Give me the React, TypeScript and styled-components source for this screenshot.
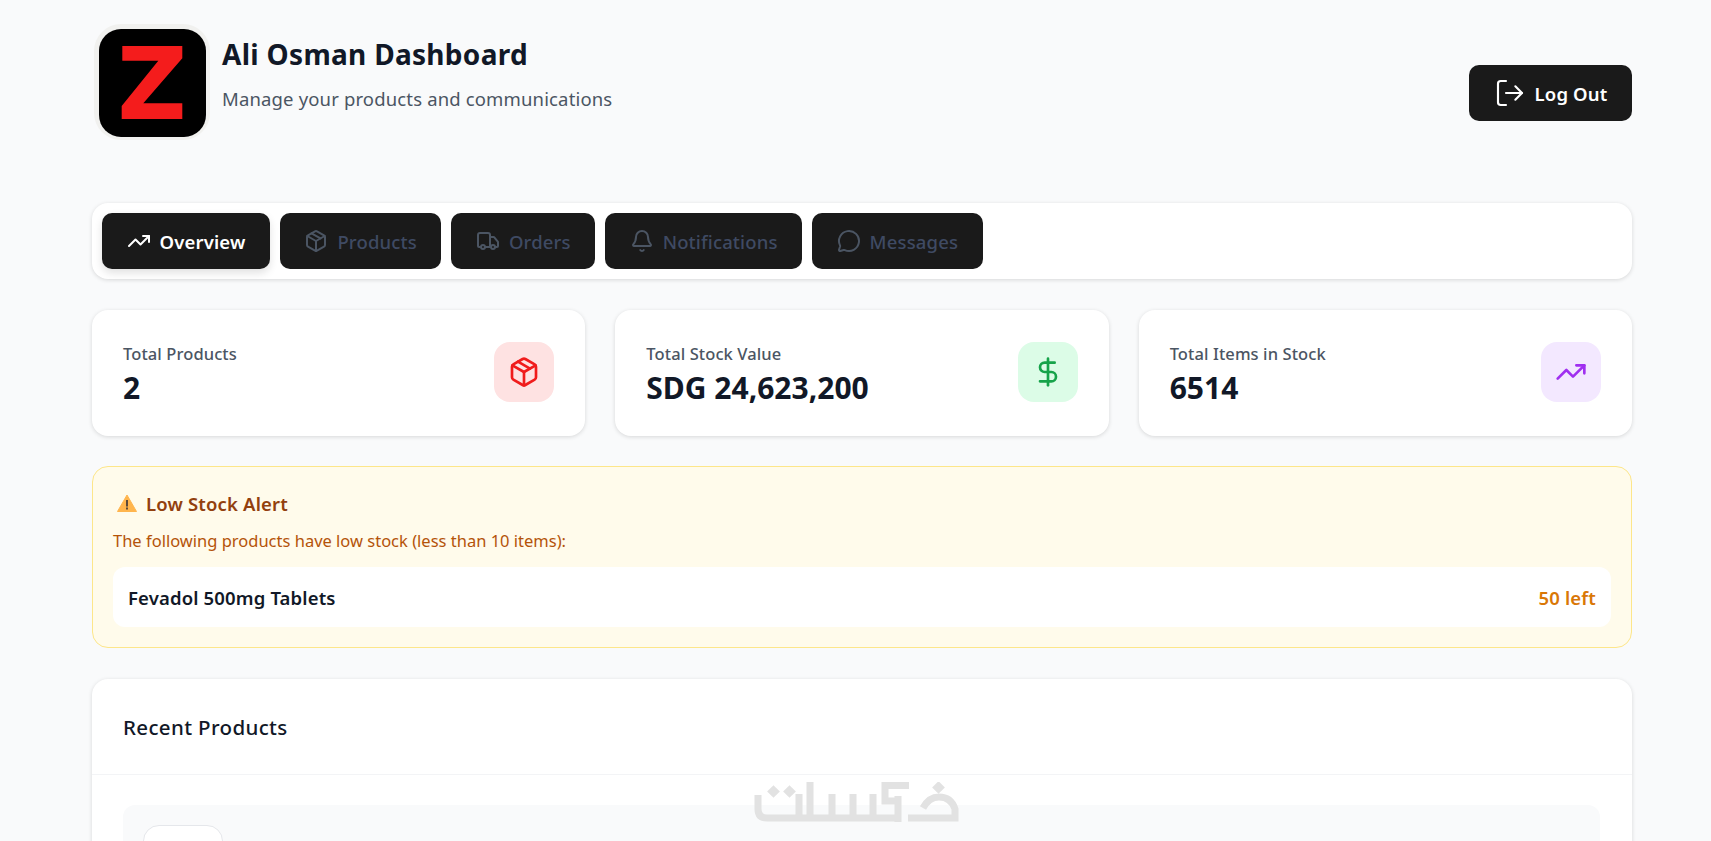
import React from 'react';
import styled, { createGlobalStyle } from 'styled-components';
import { Bell, DollarSign, LogOut, MessageCircle, Package, TrendingUp, Truck } from 'lucide-react';

const GlobalStyle = createGlobalStyle`
  html, body {
    margin: 0;
    height: 100%;
    overflow: hidden;
    background: #f9fafb;
  }
  * {
    box-sizing: border-box;
  }
  body {
    font-family: "Noto Sans", "Open Sans", "Liberation Sans", sans-serif;
    color: #111827;
  }
`;

const Page = styled.div`
  padding: 22px 79px 0 92px;
`;

const Header = styled.header`
  height: 142px;
  margin-bottom: 39px;
  display: flex;
  justify-content: space-between;
  align-items: center;
`;

const Brand = styled.div`
  align-self: flex-start;
  display: flex;
  gap: 10px;
`;

const BrandText = styled.div`
  padding-top: 13px;
`;

const Title = styled.h1`
  margin: 0 0 12px;
  font-size: 28px;
  line-height: 38px;
  font-weight: 700;
  letter-spacing: 0.3px;
`;

const Subtitle = styled.p`
  margin: 0;
  font-size: 18.5px;
  line-height: 28px;
  color: #4b5563;
  letter-spacing: 0.15px;
`;

const LogoutButton = styled.button`
  width: 163px;
  height: 56px;
  border: 0;
  border-radius: 10px;
  background: #1a1a1a;
  color: #fff;
  display: flex;
  align-items: center;
  justify-content: center;
  gap: 9px;
  font: 600 18.5px "Noto Sans", sans-serif;
  letter-spacing: 0.15px;
`;

const TabBar = styled.nav`
  height: 76px;
  margin-bottom: 31px;
  padding: 10px;
  display: flex;
  gap: 10px;
  background: #fff;
  border-radius: 16px;
  box-shadow: 0 1px 4px rgba(0, 0, 0, 0.14);
`;

const Tab = styled.button<{ $active?: boolean }>`
  height: 56px;
  padding: 0 24.5px;
  border: 0;
  border-radius: 10px;
  background: #1a1a1a;
  color: ${p => (p.$active ? '#fff' : '#3f4a63')};
  display: flex;
  align-items: center;
  gap: 9px;
  font: ${p => (p.$active ? 600 : 500)} 18.5px "Noto Sans", sans-serif;
  letter-spacing: 0.15px;
  box-shadow: ${p => (p.$active ? '0 4px 8px rgba(0, 0, 0, 0.12)' : 'none')};

  svg {
    color: ${p => (p.$active ? '#fff' : '#4b5563')};
  }
`;

const StatGrid = styled.section`
  display: grid;
  grid-template-columns: repeat(3, 1fr);
  gap: 30px;
  margin-bottom: 30px;
`;

const StatCard = styled.div`
  height: 126px;
  padding: 32px 31px;
  display: flex;
  justify-content: space-between;
  background: #fff;
  border-radius: 16px;
  box-shadow: 0 1px 4px rgba(0, 0, 0, 0.14);
`;

const StatLabel = styled.div`
  font-size: 16.5px;
  line-height: 24px;
  font-weight: 500;
  color: #4b5563;
  letter-spacing: 0.1px;
`;

const StatValue = styled.div`
  margin-top: 4px;
  font-size: 30px;
  line-height: 36px;
  font-weight: 700;
`;

const StatIcon = styled.div<{ $bg: string; $fg: string }>`
  width: 60px;
  height: 60px;
  border-radius: 16px;
  background: ${p => p.$bg};
  color: ${p => p.$fg};
  display: flex;
  align-items: center;
  justify-content: center;
`;

const Alert = styled.section`
  height: 182px;
  margin-bottom: 31px;
  padding: 20px;
  background: #fffbeb;
  border: 1px solid #fde68a;
  border-radius: 16px;
`;

const AlertTitle = styled.h3`
  margin: 0 0 10px 4px;
  display: flex;
  align-items: center;
  gap: 9px;
  height: 32px;
  font-size: 18.5px;
  font-weight: 600;
  color: #92400e;
  letter-spacing: 0.17px;
`;

const AlertText = styled.p`
  margin: 0 0 14px;
  font-size: 16.5px;
  line-height: 24px;
  color: #b45309;
`;

const AlertRow = styled.div`
  height: 60px;
  padding: 0 15px;
  display: flex;
  justify-content: space-between;
  align-items: center;
  background: #fff;
  border-radius: 12px;
  font-size: 18.5px;
  font-weight: 600;
  letter-spacing: 0.15px;
`;

const LeftCount = styled.span`
  color: #d97706;
`;

const RecentCard = styled.section`
  background: #fff;
  border-radius: 16px;
  box-shadow: 0 1px 4px rgba(0, 0, 0, 0.14);
`;

const RecentHeader = styled.div`
  height: 96px;
  padding: 0 31px;
  display: flex;
  align-items: center;
  border-bottom: 1px solid #f3f4f6;
`;

const RecentTitle = styled.h2`
  margin: 0;
  font-size: 20.5px;
  font-weight: 500;
  letter-spacing: 0.35px;
`;

const RecentBody = styled.div`
  padding: 30px 32px 30px 31px;
`;

const ProductRow = styled.div`
  padding: 20px;
  background: #f9fafb;
  border-radius: 12px;
`;

const ProductThumb = styled.div`
  width: 80px;
  height: 80px;
  background: #fff;
  border: 1px solid #e5e7eb;
  border-radius: 16px;
`;

const Watermark = styled.svg`
  position: fixed;
  left: 753px;
  top: 782px;
  pointer-events: none;
`;

function Logo() {
  return (
    <svg width="120" height="120" viewBox="0 0 120 120">
      <rect x="2" y="2" width="116" height="116" rx="27" fill="#f1f1ef" />
      <rect x="7" y="7" width="107" height="108" rx="22" fill="#000" />
      <polygon
        points="30.3,24 90.3,24 90.3,36.3 51.3,81.3 90.3,81.3 90.3,97 29.7,97 29.7,84 66.3,38.7 30.3,38.7"
        fill="#f41c1c"
      />
    </svg>
  );
}

function WarningIcon() {
  return (
    <svg width="20" height="18" viewBox="0 0 20 18">
      <path d="M10 1 L19.5 17.5 H0.5 Z" fill="#ffb54d" stroke="#ffb54d" strokeLinejoin="round" />
      <rect x="9" y="6" width="2" height="6.5" fill="#5b4a3a" />
      <rect x="9" y="13.5" width="2" height="2" fill="#5b4a3a" />
    </svg>
  );
}

function KhamsatMark() {
  return (
    <Watermark width="206" height="42" viewBox="0 0 206 42" fill="none" stroke="#e2e2e2" strokeWidth="7">
      <path d="M5 13 V27 Q5 36 14 36 H146" />
      <path d="M46 12 V36 M57 0 V36 M79 12 V36 M100 12 V36 M120 12 V36" />
      <path d="M156 3.5 H132 V19 H145 M145 14 V40" />
      <path d="M155 36 H202 V27 Q198 15 186 15 Q176 15 170 26" />
      <g fill="#e2e2e2" stroke="none">
        <rect x="16" y="5" width="9" height="9" transform="rotate(45 20.5 9.5)" />
        <rect x="32" y="5" width="9" height="9" transform="rotate(45 36.5 9.5)" />
        <rect x="181" y="1" width="9" height="9" transform="rotate(45 185.5 5.5)" />
      </g>
    </Watermark>
  );
}

const tabs = [
  { label: 'Overview', Icon: TrendingUp, active: true },
  { label: 'Products', Icon: Package },
  { label: 'Orders', Icon: Truck },
  { label: 'Notifications', Icon: Bell },
  { label: 'Messages', Icon: MessageCircle },
];

const stats = [
  { label: 'Total Products', value: '2', Icon: Package, bg: '#fee2e2', fg: '#f01c1c' },
  { label: 'Total Stock Value', value: 'SDG 24,623,200', Icon: DollarSign, bg: '#dcfce7', fg: '#16a34a' },
  { label: 'Total Items in Stock', value: '6514', Icon: TrendingUp, bg: '#f3e8ff', fg: '#a02ff0' },
];

export default function App() {
  return (
    <>
      <GlobalStyle />
      <Page>
        <Header>
          <Brand>
            <Logo />
            <BrandText>
              <Title>Ali Osman Dashboard</Title>
              <Subtitle>Manage your products and communications</Subtitle>
            </BrandText>
          </Brand>
          <LogoutButton>
            <LogOut size={32} strokeWidth={1.6} />
            Log Out
          </LogoutButton>
        </Header>

        <TabBar>
          {tabs.map(({ label, Icon, active }) => (
            <Tab key={label} $active={active}>
              <Icon size={24} strokeWidth={2} />
              {label}
            </Tab>
          ))}
        </TabBar>

        <StatGrid>
          {stats.map(({ label, value, Icon, bg, fg }) => (
            <StatCard key={label}>
              <div>
                <StatLabel>{label}</StatLabel>
                <StatValue>{value}</StatValue>
              </div>
              <StatIcon $bg={bg} $fg={fg}>
                <Icon size={32} strokeWidth={2} />
              </StatIcon>
            </StatCard>
          ))}
        </StatGrid>

        <Alert>
          <AlertTitle>
            <WarningIcon />
            Low Stock Alert
          </AlertTitle>
          <AlertText>The following products have low stock (less than 10 items):</AlertText>
          <AlertRow>
            <span>Fevadol 500mg Tablets</span>
            <LeftCount>50 left</LeftCount>
          </AlertRow>
        </Alert>

        <RecentCard>
          <RecentHeader>
            <RecentTitle>Recent Products</RecentTitle>
          </RecentHeader>
          <RecentBody>
            <ProductRow>
              <ProductThumb />
            </ProductRow>
          </RecentBody>
        </RecentCard>
      </Page>
      <KhamsatMark />
    </>
  );
}
